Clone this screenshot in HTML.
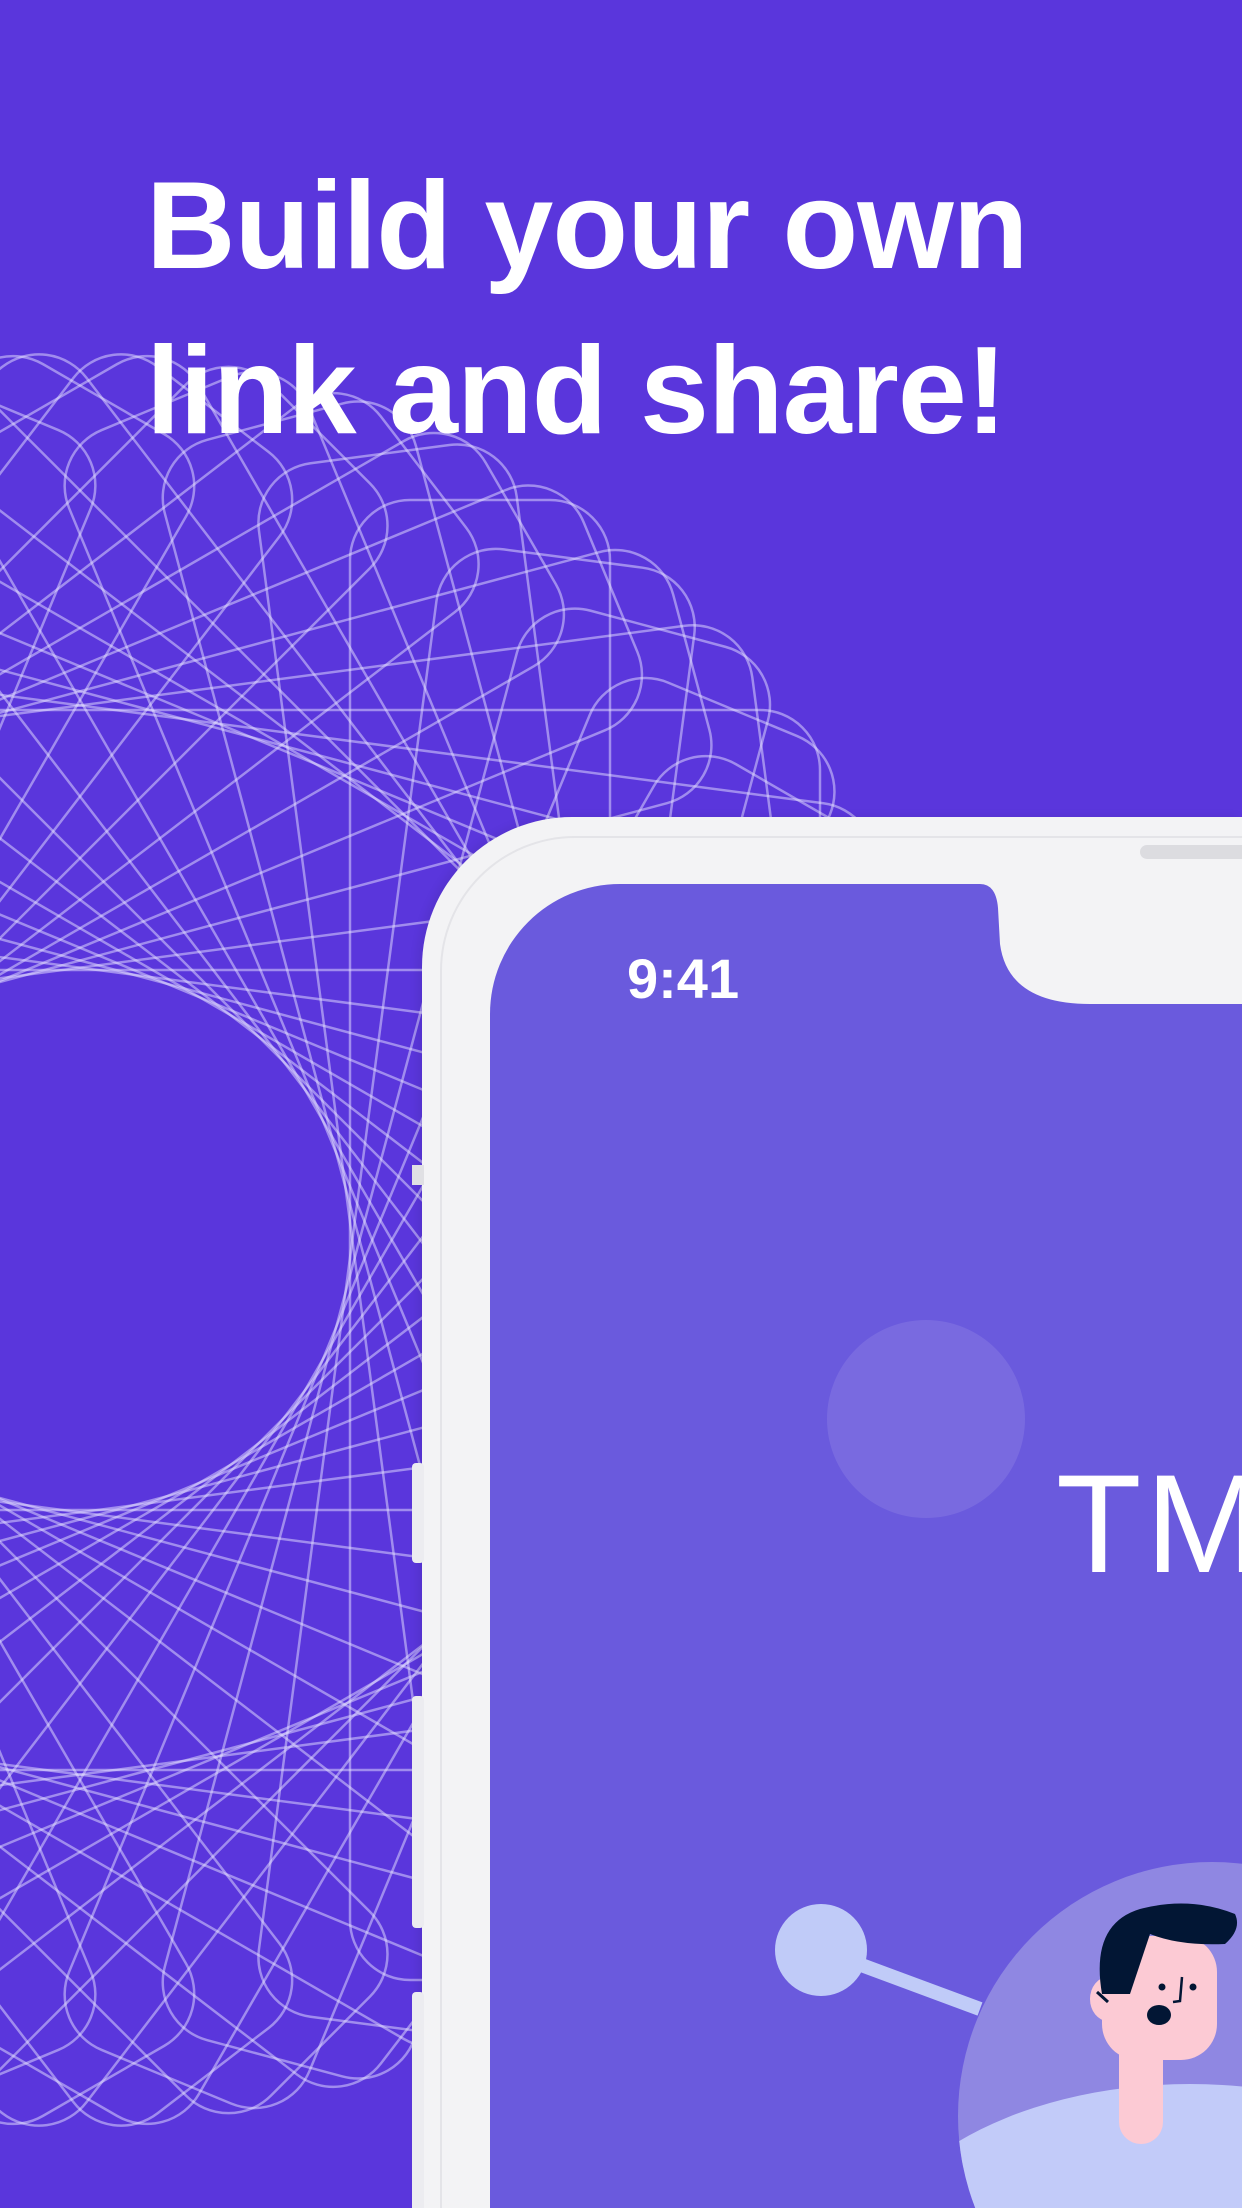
<!DOCTYPE html>
<html><head><meta charset="utf-8"><style>
html,body{margin:0;padding:0;width:1242px;height:2208px;overflow:hidden}
#w{width:1242px;height:2208px;overflow:hidden;position:relative;background:#5a36dc;font-family:"Liberation Sans",sans-serif}
.t{position:absolute;left:146px;color:#fff;font-size:124px;font-weight:bold;letter-spacing:-1px;white-space:nowrap;line-height:1}
.abs{position:absolute}
</style></head><body><div id="w">
<svg class="abs" style="left:0;top:0" width="1242" height="2208">
<g fill="none" stroke="rgba(230,225,255,0.5)" stroke-width="2.5" transform="translate(80,1240)" id="sp"></g>
</svg>
<div class="t" style="top:164px">Build your own</div>
<div class="t" style="top:329px">link and share!</div>

<div class="abs" style="left:422px;top:817px;width:820px;height:1391px;background:#f3f3f5;border-radius:150px 0 0 0;box-shadow:-4px 0 10px rgba(0,0,0,0.08)"></div>
<div class="abs" style="left:440px;top:836px;width:802px;height:1372px;border:2px solid #e4e4e8;border-right:0;border-bottom:0;border-radius:135px 0 0 0;box-sizing:border-box"></div>
<div class="abs" style="left:1140px;top:845px;width:102px;height:14px;background:#dcdce0;border-radius:7px 0 0 7px"></div>
<div class="abs" style="left:412px;top:1165px;width:12px;height:20px;background:#e0e0e4"></div>
<div class="abs" style="left:412px;top:1463px;width:12px;height:100px;background:#ececf0;border-radius:4px"></div>
<div class="abs" style="left:412px;top:1696px;width:12px;height:232px;background:#ececf0;border-radius:4px"></div>
<div class="abs" style="left:412px;top:1992px;width:12px;height:216px;background:#ececf0;border-radius:4px 4px 0 0"></div>
<div class="abs" style="left:490px;top:884px;width:752px;height:1324px;background:#6a5add;border-radius:130px 0 0 0;overflow:hidden">
  <svg class="abs" style="left:0;top:0" width="752" height="200">
    <path d="M490 0 Q506 0 508 24 L510 60 Q518 120 600 120 L752 120 L752 0 Z" fill="#f3f3f5"/>
  </svg>
  <div class="abs" style="left:137px;top:62px;color:#fff;font-size:56px;font-weight:bold">9:41</div>
  <div class="abs" style="left:337px;top:436px;width:198px;height:198px;border-radius:50%;background:rgba(255,255,255,0.1)"></div>
  <div class="abs" style="left:566px;top:570px;color:#fff;font-size:140px;font-weight:300;letter-spacing:4px;line-height:1">TM</div>
  <svg class="abs" style="left:0;top:0" width="752" height="1324">
    <line x1="331" y1="1066" x2="490" y2="1125" stroke="#c0cbf8" stroke-width="14"/>
    <circle cx="331" cy="1066" r="46" fill="#c0cbf8"/>
    <circle cx="722" cy="1232" r="254" fill="#8f87e2"/>
    <clipPath id="cc"><circle cx="722" cy="1232" r="254"/></clipPath>
    <g clip-path="url(#cc)">
      <ellipse cx="700" cy="1400" rx="330" ry="200" fill="#c2cbf9"/>
      <rect x="629" y="1130" width="44" height="130" rx="22" fill="#fccad4"/>
      <rect x="612" y="1052" width="115" height="124" rx="36" fill="#fccad4"/>
      <ellipse cx="618" cy="1115" rx="18" ry="22" fill="#fccad4"/>
      <path d="M612 1110 Q600 1040 650 1025 Q700 1012 745 1030 Q752 1045 735 1060 Q690 1062 660 1050 Q650 1080 640 1110 Z" fill="#021634"/>
      <circle cx="672" cy="1103" r="3.5" fill="#021634"/>
      <circle cx="703" cy="1103" r="3.5" fill="#021634"/>
      <path d="M692 1093 L690 1117 L683 1118" stroke="#021634" stroke-width="2.5" fill="none"/>
      <ellipse cx="669" cy="1131" rx="12" ry="10" fill="#021634"/>
      <line x1="607" y1="1108" x2="618" y2="1118" stroke="#021634" stroke-width="3"/>
    </g>
  </svg>
</div>
</div>
<script>
var g=document.getElementById('sp'),s='';
for(var a=0;a<360;a+=7.5){s+='<rect x="270" y="-740" width="260" height="1480" rx="60" transform="rotate('+a+')"/>';}
g.innerHTML=s;
</script>
</body></html>
